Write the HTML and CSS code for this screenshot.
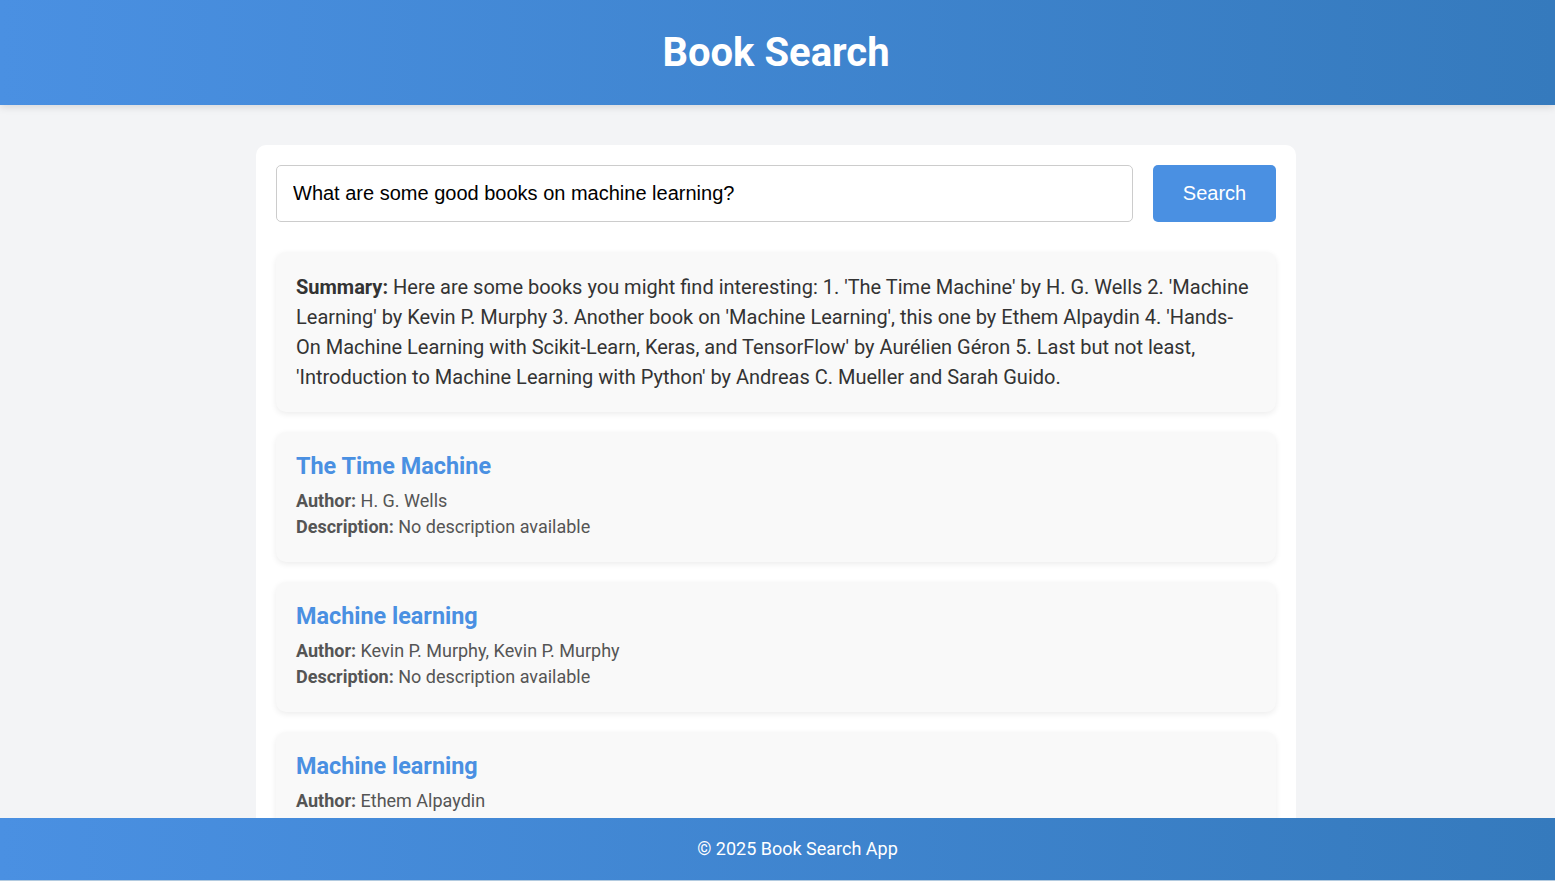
FILE: index.html
```html
<!DOCTYPE html>
<html lang="en">
<head>
<meta charset="utf-8">
<title>Book Search</title>
<link rel="stylesheet" href="styles.css">
</head>
<body>
<header class="site-header">
  <h1 class="site-title">Book Search</h1>
</header>
<div class="page">
  <main class="container">
    <form class="search-form" onsubmit="return false;">
      <input class="search-input" type="text" value="What are some good books on machine learning?">
      <button class="search-button" type="submit">Search</button>
    </form>
    <div class="summary">
      <strong>Summary:</strong> Here are some books you might find interesting: 1. 'The Time Machine' by H. G. Wells 2. 'Machine Learning' by Kevin P. Murphy 3. Another book on 'Machine Learning', this one by Ethem Alpaydin 4. 'Hands-On Machine Learning with Scikit-Learn, Keras, and TensorFlow' by Aurélien Géron 5. Last but not least, 'Introduction to Machine Learning with Python' by Andreas C. Mueller and Sarah Guido.
    </div>
    <div class="book">
      <h3 class="book-title">The Time Machine</h3>
      <p class="book-line"><strong>Author:</strong> H. G. Wells</p>
      <p class="book-line"><strong>Description:</strong> No description available</p>
    </div>
    <div class="book">
      <h3 class="book-title">Machine learning</h3>
      <p class="book-line"><strong>Author:</strong> Kevin P. Murphy, Kevin P. Murphy</p>
      <p class="book-line"><strong>Description:</strong> No description available</p>
    </div>
    <div class="book">
      <h3 class="book-title">Machine learning</h3>
      <p class="book-line"><strong>Author:</strong> Ethem Alpaydin</p>
      <p class="book-line"><strong>Description:</strong> No description available</p>
    </div>
    <div class="book">
      <h3 class="book-title">Hands-On Machine Learning with Scikit-Learn, Keras, and TensorFlow</h3>
      <p class="book-line"><strong>Author:</strong> Aurélien Géron</p>
      <p class="book-line"><strong>Description:</strong> No description available</p>
    </div>
  </main>
</div>
<footer class="site-footer">
  <p class="footer-text">© 2025 Book Search App</p>
</footer>
</body>
</html>
```
FILE: styles.css
```css
* { box-sizing: border-box; }

html {
  margin: 0;
  padding: 0;
  background: #fff;
}

body {
  margin: 0 3px 0 0;
  padding: 0 0 80px;
  min-height: 100vh;
  font-family: Roboto, "Liberation Sans", Arial, sans-serif;
  background: #f3f4f6;
  color: #333;
}

.site-header {
  background: linear-gradient(90deg, #4a90e2 0%, #357abd 100%);
  height: 105px;
  display: flex;
  align-items: center;
  justify-content: center;
  padding-right: 3px;
  box-shadow: 0 2px 8px rgba(0, 0, 0, 0.12);
}

.site-title {
  margin: 0;
  color: #fff;
  font-size: 40px;
  font-weight: 700;
  line-height: 1;
}

.page {
  padding-right: 3px;
}

.container {
  width: 1040px;
  margin: 40px auto 0;
  background: #fff;
  border-radius: 10px;
  padding: 20px;
}

.search-form {
  display: flex;
  gap: 20px;
}

.search-input {
  flex: 1;
  height: 57px;
  padding: 0 16px;
  font-family: "Liberation Sans", Arial, sans-serif;
  font-size: 20px;
  color: #000;
  border: 1px solid #ccc;
  border-radius: 5px;
  background: #fff;
}

.search-button {
  width: 123px;
  height: 57px;
  border: none;
  border-radius: 5px;
  background: #4a90e2;
  color: #fff;
  font-family: "Liberation Sans", Arial, sans-serif;
  font-size: 20px;
}

.summary {
  margin-top: 30px;
  background: #f9f9f9;
  border-radius: 10px;
  padding: 20px;
  font-size: 20px;
  line-height: 30px;
  color: #333;
  box-shadow: 0 2px 6px rgba(0, 0, 0, 0.08);
}

.summary strong { font-weight: 700; }

.book {
  margin-top: 20px;
  background: #f9f9f9;
  border-radius: 10px;
  padding: 20px;
  height: 130px;
  font-size: 18px;
  box-shadow: 0 2px 6px rgba(0, 0, 0, 0.08);
}

.book-title {
  margin: 0 0 8px;
  font-size: 1.3em;
  line-height: 28px;
  font-weight: 700;
  color: #4a90e2;
}

.book-line {
  margin: 0;
  font-size: 18px;
  line-height: 26px;
  color: #555;
}

.book-line strong { font-weight: 700; }

.site-footer {
  position: fixed;
  left: 0;
  right: 3px;
  bottom: 0;
  height: 63px;
  background: linear-gradient(90deg, #4a90e2 0%, #357abd 100%);
  border-bottom: 1px solid #b3cbe0;
  display: flex;
  align-items: center;
  justify-content: center;
  padding: 0 0 2px 40px;
}

.footer-text {
  margin: 0;
  color: #fff;
  font-size: 18px;
}
```
